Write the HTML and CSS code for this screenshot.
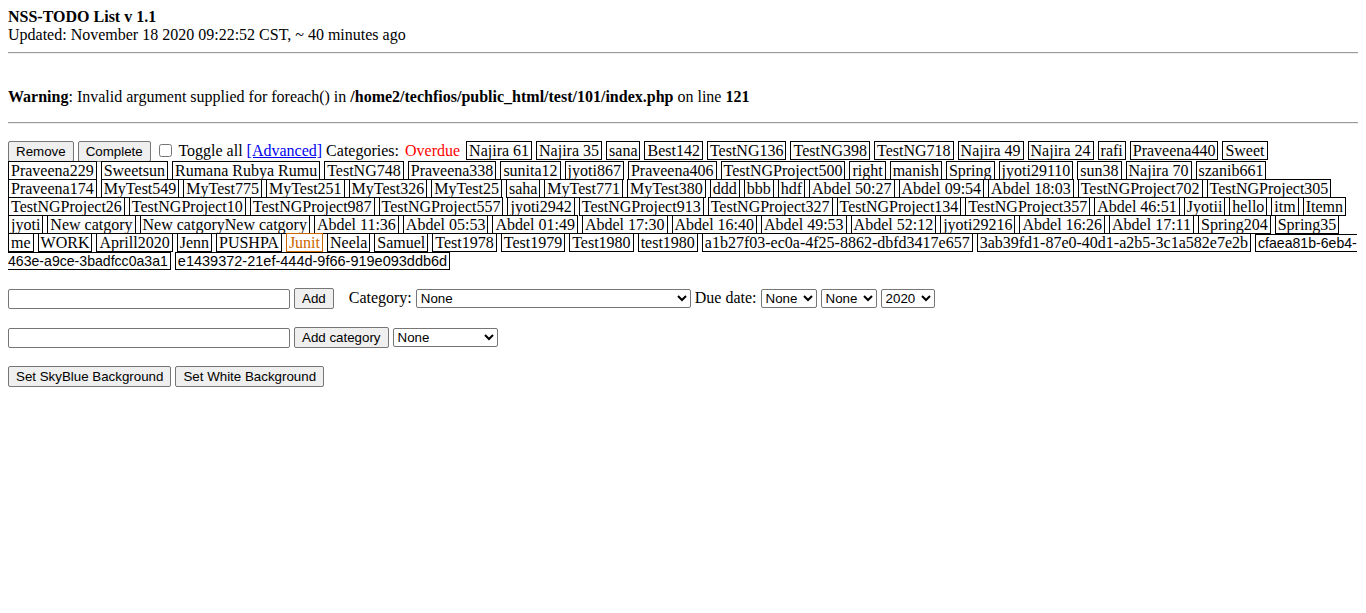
FILE: index.html
```html
<!DOCTYPE html>
<html>
<head>
<meta charset="utf-8">
<title>NSS-TODO List</title>
<link rel="stylesheet" href="styles.css">
</head>
<body>
<div class="title">NSS-TODO List v 1.1</div>
<div class="updated">Updated: November 18 2020 09:22:52 CST, ~ 40 minutes ago</div>
<hr class="rule">
<div class="warning"><b>Warning</b>: Invalid argument supplied for foreach() in <b>/home2/techfios/public_html/test/101/index.php</b> on line <b>121</b></div>
<hr class="rule">
<div class="toolbar"><button class="btn">Remove</button> <button class="btn">Complete</button> <input type="checkbox" class="check"> Toggle all <a href="#" class="adv">[Advanced]</a> Categories: <span class="overdue">Overdue</span> <span class="cat">Najira 61</span> <span class="cat">Najira 35</span> <span class="cat">sana</span> <span class="cat">Best142</span> <span class="cat">TestNG136</span> <span class="cat">TestNG398</span> <span class="cat">TestNG718</span> <span class="cat">Najira 49</span> <span class="cat">Najira 24</span> <span class="cat">rafi</span> <span class="cat">Praveena440</span> <span class="cat">Sweet</span> <span class="cat">Praveena229</span> <span class="cat">Sweetsun</span> <span class="cat">Rumana Rubya Rumu</span> <span class="cat">TestNG748</span> <span class="cat">Praveena338</span> <span class="cat">sunita12</span> <span class="cat">jyoti867</span> <span class="cat">Praveena406</span> <span class="cat">TestNGProject500</span> <span class="cat">right</span> <span class="cat">manish</span> <span class="cat">Spring</span> <span class="cat">jyoti29110</span> <span class="cat">sun38</span> <span class="cat">Najira 70</span> <span class="cat">szanib661</span> <span class="cat">Praveena174</span> <span class="cat">MyTest549</span> <span class="cat">MyTest775</span> <span class="cat">MyTest251</span> <span class="cat">MyTest326</span> <span class="cat">MyTest25</span> <span class="cat">saha</span> <span class="cat">MyTest771</span> <span class="cat">MyTest380</span> <span class="cat">ddd</span> <span class="cat">bbb</span> <span class="cat">hdf</span> <span class="cat">Abdel 50:27</span> <span class="cat">Abdel 09:54</span> <span class="cat">Abdel 18:03</span> <span class="cat">TestNGProject702</span> <span class="cat">TestNGProject305</span> <span class="cat">TestNGProject26</span> <span class="cat">TestNGProject10</span> <span class="cat">TestNGProject987</span> <span class="cat">TestNGProject557</span> <span class="cat">jyoti2942</span> <span class="cat">TestNGProject913</span> <span class="cat">TestNGProject327</span> <span class="cat">TestNGProject134</span> <span class="cat">TestNGProject357</span> <span class="cat">Abdel 46:51</span> <span class="cat">Jyotii</span> <span class="cat">hello</span> <span class="cat">itm</span> <span class="cat">Itemn</span> <span class="cat">jyoti</span> <span class="cat">New catgory</span> <span class="cat">New catgoryNew catgory</span> <span class="cat">Abdel 11:36</span> <span class="cat">Abdel 05:53</span> <span class="cat">Abdel 01:49</span> <span class="cat">Abdel 17:30</span> <span class="cat">Abdel 16:40</span> <span class="cat">Abdel 49:53</span> <span class="cat">Abdel 52:12</span> <span class="cat">jyoti29216</span> <span class="cat">Abdel 16:26</span> <span class="cat">Abdel 17:11</span> <span class="cat">Spring204</span> <span class="cat">Spring35</span> <span class="cat">me</span> <span class="cat">WORK</span> <span class="cat">Aprill2020</span> <span class="cat">Jenn</span> <span class="cat">PUSHPA</span> <span class="cat cat-orange">Junit</span> <span class="cat">Neela</span> <span class="cat">Samuel</span> <span class="cat">Test1978</span> <span class="cat">Test1979</span> <span class="cat">Test1980</span> <span class="cat">test1980</span> <span class="cat">a1b27f03-ec0a-4f25-8862-dbfd3417e657</span> <span class="cat">3ab39fd1-87e0-40d1-a2b5-3c1a582e7e2b</span> <span class="cat cat-sans cat-sans-narrow">cfaea81b-6eb4-463e-a9ce-3badfcc0a3a1</span> <span class="cat cat-sans">e1439372-21ef-444d-9f66-919e093ddb6d</span></div>
<div class="form-row form-first"><input type="text" class="field"> <button class="btn">Add</button><span class="label-cat">Category:</span> <select class="sel sel-wide"><option>None</option></select> Due date: <select class="sel sel-small"><option>None</option></select> <select class="sel sel-small"><option>None</option></select> <select class="sel sel-year"><option>2020</option></select></div>
<div class="form-row"><input type="text" class="field"> <button class="btn">Add category</button> <select class="sel sel-mid"><option>None</option></select></div>
<div class="form-row"><button class="btn">Set SkyBlue Background</button> <button class="btn">Set White Background</button></div>
</body>
</html>
```
FILE: styles.css
```css
html, body {
  background: #ffffff;
}
body {
  margin: 8px;
  font-family: "Liberation Serif", "Times New Roman", serif;
  font-size: 16px;
  color: #000000;
}
.title {
  font-weight: bold;
}
.rule {
  margin: 8px 0;
  border: 0;
  border-top: 1px solid #9a9a9a;
  border-bottom: 1px solid #eeeeee;
  height: 0;
}
.warning {
  padding-top: 26px;
  padding-bottom: 8px;
}
.toolbar {
  margin-top: 17px;
}
.btn {
  font-family: "Liberation Sans", Arial, sans-serif;
  font-size: 13.333px;
  color: #000000;
  background: #efefef;
  border: 1px solid #767676;
  border-radius: 2px;
  padding: 2px 7px;
  margin: 0;
}
.btn:hover {
  background: #e5e5e5;
}
.check {
  margin: 3px 3px 3px 4px;
  width: 13px;
  height: 13px;
  vertical-align: -1px;
}
.adv {
  color: #0000ee;
  text-decoration: underline;
}
.overdue {
  color: #ff0000;
  padding: 0 2px;
}
.cat {
  border: 1px solid #000000;
  padding: 0 2px;
}
.cat-orange {
  color: #cc6600;
  border-color: #cc6600;
}
.cat-sans {
  font-family: "Liberation Sans", Arial, sans-serif;
  font-size: 14.5px;
}
.cat-sans-narrow {
  font-size: 14.1px;
}
.form-row {
  margin-top: 18px;
}
.form-first {
  margin-top: 18px;
}
.field {
  width: 282px;
  height: 20px;
  box-sizing: border-box;
  border: 1px solid #767676;
  border-radius: 2px;
  padding: 1px 2px;
  font-family: "Liberation Sans", Arial, sans-serif;
  font-size: 13.333px;
  margin: 0;
}
.label-cat {
  margin-left: 15px;
}
.sel {
  font-family: "Liberation Sans", Arial, sans-serif;
  font-size: 13.333px;
  color: #000000;
  background: #ffffff;
  border: 1px solid #767676;
  border-radius: 2px;
  height: 19px;
  box-sizing: border-box;
  margin: 0;
}
.sel-wide {
  width: 275px;
}
.sel-small {
  width: 56px;
}
.sel-year {
  width: 54px;
}
.sel-mid {
  width: 105px;
}
```
